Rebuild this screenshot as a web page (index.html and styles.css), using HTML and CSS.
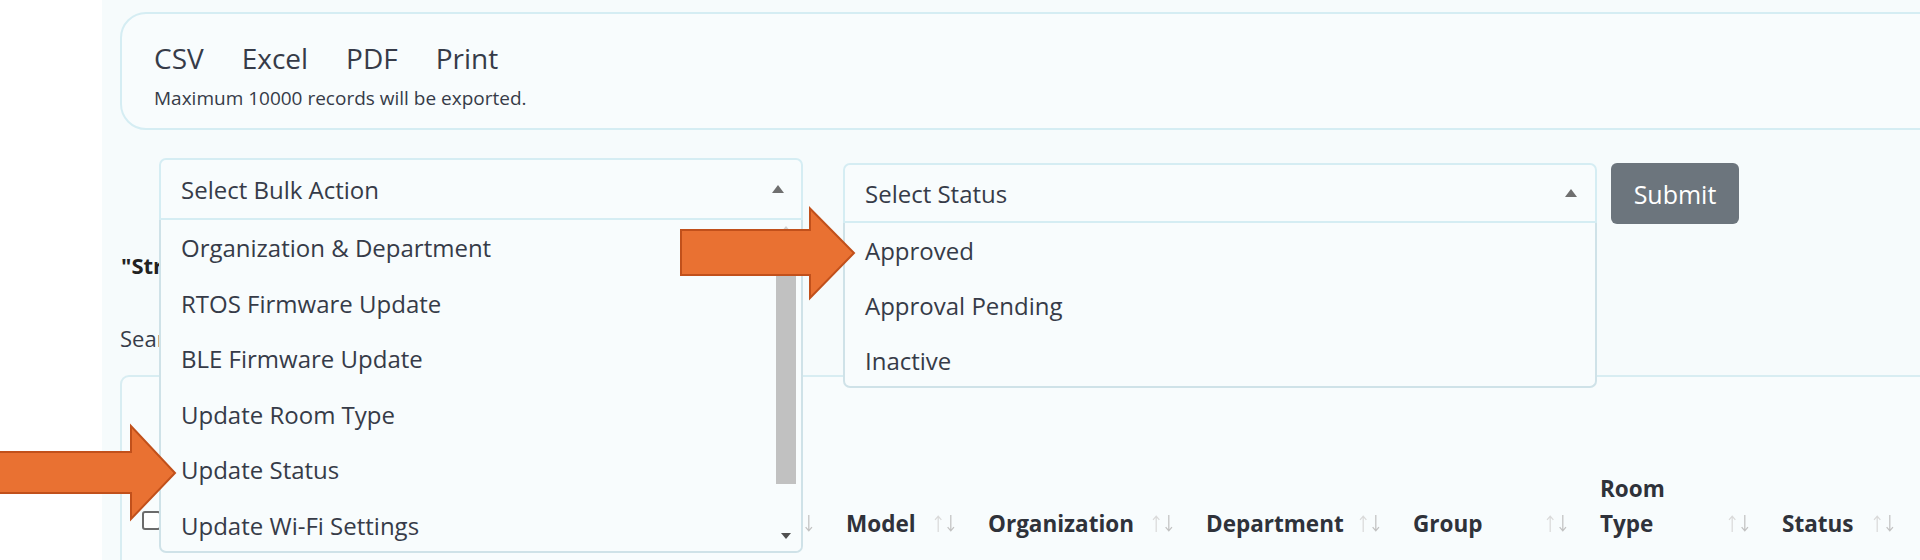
FILE: index.html
```html
<!DOCTYPE html>
<html lang="en">
<head>
<meta charset="utf-8">
<title>Devices</title>
<link rel="stylesheet" href="styles.css">
</head>
<body>
<div class="app">
  <div class="gutter"></div>
  <main class="main">
    <section class="export-card">
      <div class="export-buttons">
        <span class="export-btn">CSV</span>
        <span class="export-btn">Excel</span>
        <span class="export-btn">PDF</span>
        <span class="export-btn">Print</span>
      </div>
      <p class="export-note">Maximum 10000 records will be exported.</p>
    </section>

    <div class="toolbar">
      <div class="select select-bulk">
        <div class="select-head"><span>Select Bulk Action</span><span class="caret"></span></div>
        <div class="select-list list-bulk">
          <ul class="options">
            <li>Organization &amp; Department</li>
            <li>RTOS Firmware Update</li>
            <li>BLE Firmware Update</li>
            <li>Update Room Type</li>
            <li>Update Status</li>
            <li>Update Wi-Fi Settings</li>
            <li>Delete Devices</li>
          </ul>
          <div class="scrollbar">
            <span class="sb-up"></span>
            <span class="sb-thumb"></span>
            <span class="sb-space"></span>
            <span class="sb-down"></span>
          </div>
        </div>
      </div>
      <div class="select select-status">
        <div class="select-head"><span>Select Status</span><span class="caret"></span></div>
        <div class="select-list list-status">
          <ul class="options">
            <li>Approved</li>
            <li>Approval Pending</li>
            <li>Inactive</li>
          </ul>
        </div>
      </div>
      <button class="btn-submit" type="button">Submit</button>
    </div>

    <h2 class="list-title">"Strips" Device List</h2>
    <div class="search">Search:</div>

    <section class="table-card">
      <div class="thead">
        <div class="th th-check"><span class="checkbox"></span></div>
        <div class="th th-name"><span>Device Name</span><svg class="sort" viewBox="0 0 20 18"><path class="up" d="M4 17V2M1 5.5L4 2l3 3.5"/><path class="down" d="M16 1v15M13 12.5l3 3.5 3-3.5"/></svg></div>
        <div class="th th-serial"><span>Serial Number</span><svg class="sort" viewBox="0 0 20 18"><path class="up" d="M4 17V2M1 5.5L4 2l3 3.5"/><path class="down" d="M16 1v15M13 12.5l3 3.5 3-3.5"/></svg></div>
        <div class="th th-model"><span>Model</span><svg class="sort" viewBox="0 0 20 18"><path class="up" d="M4 17V2M1 5.5L4 2l3 3.5"/><path class="down" d="M16 1v15M13 12.5l3 3.5 3-3.5"/></svg></div>
        <div class="th th-org"><span>Organization</span><svg class="sort" viewBox="0 0 20 18"><path class="up" d="M4 17V2M1 5.5L4 2l3 3.5"/><path class="down" d="M16 1v15M13 12.5l3 3.5 3-3.5"/></svg></div>
        <div class="th th-dept"><span>Department</span><svg class="sort" viewBox="0 0 20 18"><path class="up" d="M4 17V2M1 5.5L4 2l3 3.5"/><path class="down" d="M16 1v15M13 12.5l3 3.5 3-3.5"/></svg></div>
        <div class="th th-group"><span>Group</span><svg class="sort" viewBox="0 0 20 18"><path class="up" d="M4 17V2M1 5.5L4 2l3 3.5"/><path class="down" d="M16 1v15M13 12.5l3 3.5 3-3.5"/></svg></div>
        <div class="th th-room"><span>Room<br>Type</span><svg class="sort" viewBox="0 0 20 18"><path class="up" d="M4 17V2M1 5.5L4 2l3 3.5"/><path class="down" d="M16 1v15M13 12.5l3 3.5 3-3.5"/></svg></div>
        <div class="th th-status"><span>Status</span><svg class="sort" viewBox="0 0 20 18"><path class="up" d="M4 17V2M1 5.5L4 2l3 3.5"/><path class="down" d="M16 1v15M13 12.5l3 3.5 3-3.5"/></svg></div>
      </div>
    </section>
  </main>

  <svg class="callout callout-approved" viewBox="0 0 176 93" aria-hidden="true">
    <polygon points="1,23 130,23 130,1.5 174,46 130,91 130,68 1,68"/>
  </svg>
  <svg class="callout callout-status" viewBox="0 0 178 97" aria-hidden="true">
    <polygon points="-5,28 131,28 131,2 175,49 131,95 131,69 -5,69"/>
  </svg>
</div>
</body>
</html>
```

FILE: styles.css
```css
* { box-sizing: border-box; }

html, body {
  margin: 0;
  padding: 0;
  background: #ffffff;
  overflow: hidden;
}

body {
  font-family: "Open Sans", "Noto Sans", sans-serif;
  color: #363b48;
}

.app {
  position: relative;
  display: flex;
  width: 1920px;
  height: 560px;
  overflow: hidden;
}

.gutter {
  width: 102px;
  flex: none;
  background: #ffffff;
}

.main {
  flex: 1;
  min-width: 0;
  background: #f6fbfc;
  padding: 12px 0 0 18px;
}

/* Export card */
.export-card {
  height: 118px;
  margin-right: -40px;
  border: 2px solid #d5edf3;
  border-radius: 26px;
  background: #f8fcfd;
  padding: 26px 0 0 32px;
}

.export-buttons {
  display: flex;
  gap: 38px;
  font-size: 28px;
  line-height: 36px;
  color: #363b48;
}

.export-note {
  margin: 10px 0 0;
  font-size: 19px;
  line-height: 24px;
  color: #363b48;
}

/* Toolbar with selects */
.toolbar {
  display: flex;
  align-items: flex-start;
  margin-top: 28px;
  padding-left: 39px;
  position: relative;
  z-index: 5;
}

.select {
  position: relative;
  font-size: 24px;
}

.select-bulk { width: 644px; }
.select-status { width: 754px; margin-left: 40px; margin-top: 5px; }

.select-head {
  display: flex;
  align-items: center;
  justify-content: space-between;
  border: 2px solid #d5edf3;
  border-radius: 7px 7px 0 0;
  background: #f8fcfd;
  padding: 0 17px 0 20px;
  color: #363b48;
}

.select-bulk .select-head { height: 62px; }
.select-status .select-head { height: 60px; padding-right: 18px; }

.caret {
  width: 0;
  height: 0;
  border-left: 6px solid transparent;
  border-right: 6px solid transparent;
  border-bottom: 8px solid #6f6f6f;
}

.select-list {
  position: absolute;
  top: 100%;
  left: 0;
  right: 0;
  background: #f8fcfd;
  border: 2px solid #cfe2e8;
  border-top: none;
  border-radius: 0 0 7px 7px;
  overflow: hidden;
}

.list-bulk { height: 333px; }
.list-status { height: 165px; }

.options {
  list-style: none;
  margin: 0;
  padding: 0;
}

.options li {
  height: 55.6px;
  line-height: 55.6px;
  padding-left: 20px;
  white-space: nowrap;
  color: #363b48;
}

.list-status .options li {
  height: 55px;
  line-height: 55px;
}

.scrollbar {
  position: absolute;
  top: 0;
  right: 0;
  bottom: 0;
  width: 26px;
  padding-left: 1px;
  display: flex;
  flex-direction: column;
  align-items: flex-start;
  background: #f8fcfd;
}

.sb-up {
  flex: none;
  margin: 6px 0 0 5px;
  width: 0;
  height: 0;
  border-left: 5px solid transparent;
  border-right: 5px solid transparent;
  border-bottom: 6px solid #d0d0d0;
}

.sb-thumb {
  flex: none;
  margin-top: 10px;
  width: 20px;
  height: 242px;
  background: #c1c1c1;
}

.sb-space { flex: 1; }

.sb-down {
  flex: none;
  margin: 0 0 12px 5px;
  width: 0;
  height: 0;
  border-left: 5px solid transparent;
  border-right: 5px solid transparent;
  border-top: 6px solid #505050;
}

.btn-submit {
  margin-left: 14px;
  margin-top: 5px;
  width: 128px;
  height: 61px;
  border: none;
  border-radius: 6px;
  background: #6c757d;
  color: #ffffff;
  font-family: "Open Sans", "Noto Sans", sans-serif;
  font-size: 25px;
  font-weight: 500;
  padding: 0;
}

/* Heading and search */
.list-title {
  margin: 26px 0 0 1px;
  font-size: 22px;
  line-height: 30px;
  font-weight: 700;
  color: #222;
}

.search {
  margin-top: 43px;
  font-size: 22px;
  line-height: 30px;
  color: #363b48;
}

/* Table card */
.table-card {
  margin-top: 22px;
  margin-right: -40px;
  height: 260px;
  border: 2px solid #d8edf2;
  border-radius: 9px;
  background: #f8fcfd;
  padding-top: 94px;
}

.thead {
  display: flex;
  align-items: flex-end;
}

.th {
  display: flex;
  align-items: flex-end;
  justify-content: space-between;
  padding-right: 33px;
  font-size: 22.5px;
  line-height: 35px;
  font-weight: 700;
  color: #2f323a;
  white-space: nowrap;
  flex: none;
}

.th-check { width: 58px; padding: 0 0 0 20px; margin-bottom: 11px; }
.th-name { width: 320px; }
.th-serial { width: 346px; }
.th-model { width: 142px; }
.th-org { width: 218px; }
.th-dept { width: 207px; }
.th-group { width: 187px; }
.th-room { width: 182px; }
.th-status { width: 145px; }

.checkbox {
  display: block;
  width: 19px;
  height: 19px;
  border: 2px solid #6b6b6b;
  border-radius: 3px;
  background: #fff;
}

.sort {
  width: 21px;
  height: 19px;
  margin-bottom: 8px;
  fill: none;
  stroke-width: 1.2;
}

.sort .up { stroke: #dadada; }
.sort .down { stroke: #c2c2c2; }

/* Callout arrows drawn over the screenshot */
.callout {
  position: absolute;
  z-index: 20;
  overflow: visible;
}

.callout polygon {
  fill: #e97132;
  stroke: #c1501b;
  stroke-width: 2;
  stroke-linejoin: miter;
}

.callout-approved {
  left: 680px;
  top: 207px;
  width: 176px;
  height: 93px;
}

.callout-status {
  left: 0;
  top: 424px;
  width: 178px;
  height: 97px;
}
```
